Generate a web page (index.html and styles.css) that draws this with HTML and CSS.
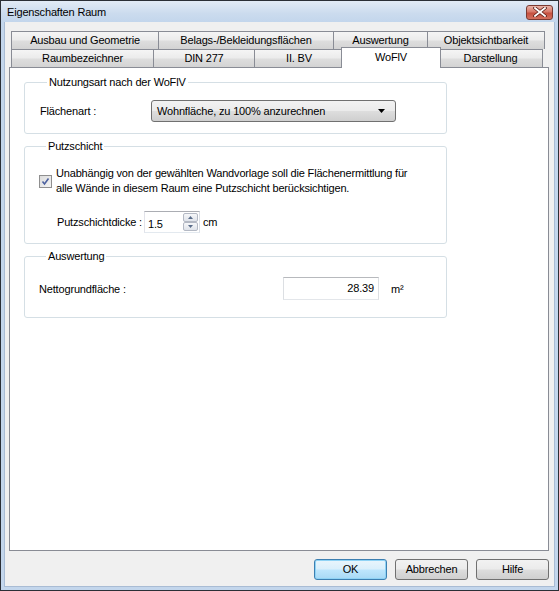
FILE: index.html
```html
<!doctype html>
<html lang="de">
<head>
    <meta charset="UTF-8">
    <title>Eigenschaften Raum</title>
    <link rel="stylesheet" href="styles.css">
</head>
<body>
<div class="window">
    <div class="titlebar">
        <span class="title">Eigenschaften Raum</span>
        <span class="close">
            <svg width="14" height="10" viewBox="0 0 14 10">
                <path d="M2 1 L12 9 M12 1 L2 9" stroke="#5a1d16" stroke-width="3.4" stroke-linecap="square"/>
                <path d="M2 1 L12 9 M12 1 L2 9" stroke="#fff" stroke-width="1.8" stroke-linecap="square"/>
            </svg>
        </span>
    </div>
    <div class="client">
        <div class="tabs">
            <div class="tabrow">
                <div class="tab t-ausbau">Ausbau und Geometrie</div>
                <div class="tab t-belag">Belags-/Bekleidungsflächen</div>
                <div class="tab t-ausw">Auswertung</div>
                <div class="tab t-objekt">Objektsichtbarkeit</div>
            </div>
            <div class="tabrow">
                <div class="tab t-raum">Raumbezeichner</div>
                <div class="tab t-din">DIN 277</div>
                <div class="tab t-bv">II. BV</div>
                <div class="tab t-wofl active">WoFlV</div>
                <div class="tab t-darst">Darstellung</div>
            </div>
        </div>
        <div class="panel">
            <fieldset class="group g-nutz">
                <legend>Nutzungsart nach der WoFlV</legend>
                <div class="row">
                    <span class="lbl lbl-art">Flächenart :</span>
                    <div class="combo">
                        <span>Wohnfläche, zu 100% anzurechnen</span>
                        <svg class="arrow" width="7" height="4" viewBox="0 0 7 4"><path d="M0 0 H7 L3.5 4 Z" fill="#000"/></svg>
                    </div>
                </div>
            </fieldset>
            <fieldset class="group g-putz">
                <legend>Putzschicht</legend>
                <div class="check">
                    <span class="box">
                        <svg width="11" height="11" viewBox="0 0 11 11">
                            <path d="M2.5 5.5 L4.5 8 L8.5 2.5" fill="none" stroke="#4d62a0" stroke-width="1.6"/>
                        </svg>
                    </span>
                    <span class="check-text">Unabhängig von der gewählten Wandvorlage soll die Flächenermittlung für<br>alle Wände in diesem Raum eine Putzschicht berücksichtigen.</span>
                </div>
                <div class="row spinrow">
                    <span class="lbl lbl-dicke">Putzschichtdicke :</span>
                    <div class="spin">
                        <span class="spin-val">1.5</span>
                        <span class="spin-btns">
                            <span class="sbtn"><svg width="5" height="3" viewBox="0 0 5 3"><path d="M0 3 H5 L2.5 0 Z" fill="#5a6d8a"/></svg></span>
                            <span class="sbtn"><svg width="5" height="3" viewBox="0 0 5 3"><path d="M0 0 H5 L2.5 3 Z" fill="#5a6d8a"/></svg></span>
                        </span>
                    </div>
                    <span class="unit">cm</span>
                </div>
            </fieldset>
            <fieldset class="group g-ausw">
                <legend>Auswertung</legend>
                <div class="row">
                    <span class="lbl lbl-netto">Nettogrundfläche :</span>
                    <div class="field">28.39</div>
                    <span class="unit unit-m2">m²</span>
                </div>
            </fieldset>
        </div>
        <div class="buttons">
            <div class="btn default">OK</div>
            <div class="btn">Abbrechen</div>
            <div class="btn">Hilfe</div>
        </div>
    </div>
</div>
</body>
</html>
```

FILE: styles.css
```css
* {
    margin: 0;
    padding: 0;
    box-sizing: border-box;
}

body {
    font-family: "Liberation Sans", Arial, sans-serif;
    font-size: 11px;
    letter-spacing: -0.17px;
    color: #000;
    background: #fff;
}

.window {
    width: 559px;
    height: 591px;
    border: 1px solid #2b2f36;
    background: #c3d6ec;
    display: flex;
    flex-direction: column;
}

.titlebar {
    height: 21px;
    background: linear-gradient(#e2ebf6, #cbdbee 60%, #c3d6ec);
    display: flex;
    align-items: center;
    justify-content: space-between;
    padding: 0 5px 0 6px;
}

.title {
    font-size: 11px;
}

.close {
    width: 27px;
    height: 15px;
    border: 1px solid #7a3a32;
    border-radius: 3px;
    background: linear-gradient(#e9b3a8, #d77868 45%, #c5503f 55%, #d3715f);
    display: flex;
    align-items: center;
    justify-content: center;
    margin-top: 1px;
}

.client {
    flex: 1;
    margin: 0 3px 3px 3px;
    background: #f0f0f0;
    border: 1px solid #a9bcd4;
    border-top: 0;
    padding: 9px 5px 0 4px;
    display: flex;
    flex-direction: column;
}

.tabs {
    margin: 0 3px 0 2px;
}

.tabrow {
    display: flex;
    height: 18px;
}

.tab {
    height: 18px;
    border: 1px solid #898c95;
    border-bottom: 0;
    margin-right: -1px;
    background: linear-gradient(#f5f5f5, #ebebeb 48%, #dedede 52%, #d3d3d3);
    text-align: center;
    line-height: 17px;
    white-space: nowrap;
}

.t-ausbau { width: 148px; }
.t-belag { width: 176px; }
.t-ausw { width: 95px; }
.t-objekt { width: 118px; }
.t-raum { width: 143px; }
.t-din { width: 102px; }
.t-bv { width: 90px; }
.t-wofl { width: 97px; }
.t-darst { width: 105px; }

.tab.active {
    position: relative;
    z-index: 2;
    background: #fff;
    height: 21px;
    margin: -2px -3px -1px -2px;
    width: 100px;
    line-height: 18px;
}

.panel {
    height: 484px;
    background: #fff;
    border: 1px solid #898c95;
    padding: 8px 0 0 14px;
}

.group {
    width: 423px;
    border: 1px solid #d5dfe5;
    border-radius: 3px;
}

.group legend {
    margin-left: 7px;
    padding: 0 2px;
    line-height: 13px;
}

.g-nutz {
    padding: 11px 0 11px 15px;
}

.g-putz {
    margin-top: 6px;
    padding: 13px 0 10px 14px;
}

.g-ausw {
    margin-top: 6px;
    padding: 14px 0 17px 14px;
}

.row {
    display: flex;
    align-items: center;
    white-space: nowrap;
}

.lbl {
    flex-shrink: 0;
}

.lbl-art {
    width: 111px;
}

.combo {
    width: 245px;
    height: 22px;
    border: 1px solid #707070;
    border-radius: 3px;
    background: linear-gradient(#f2f2f2, #ebebeb 48%, #dddddd 52%, #cfcfcf);
    display: flex;
    align-items: center;
    justify-content: space-between;
    padding: 0 10px 0 5px;
}

.check {
    display: flex;
    align-items: center;
    line-height: 15px;
}

.box {
    width: 13px;
    height: 13px;
    border: 1px solid #8f8f8f;
    background: linear-gradient(135deg, #dcdcdc, #f4f4f4);
    margin-right: 4px;
    display: flex;
    align-items: center;
    justify-content: center;
}

.spinrow {
    margin-top: 15px;
    padding-left: 18px;
}

.lbl-dicke {
    width: 87px;
}

.spin {
    width: 56px;
    height: 22px;
    border: 1px solid #abadb3;
    border-color: #abadb3 #dbdfe6 #e3e9ef #e2e3ea;
    background: #fff;
    display: flex;
    justify-content: space-between;
    padding: 1px 1px 1px 3px;
}

.spin-val {
    line-height: 20px;
    padding-top: 1px;
}

.spin-btns {
    display: flex;
    flex-direction: column;
    width: 15px;
}

.sbtn {
    flex: 1;
    border: 1px solid #b4b9c4;
    border-radius: 2px;
    background: linear-gradient(#f6f7f9, #dfe3ea);
    display: flex;
    align-items: center;
    justify-content: center;
}

.unit {
    margin-left: 3px;
}

.lbl-netto {
    width: 244px;
}

.field {
    width: 96px;
    height: 23px;
    border: 1px solid #c9cbd0;
    border-color: #b7b9bd #dcdfe3 #e3e6ea #dcdfe3;
    background: #fff;
    text-align: right;
    line-height: 21px;
    padding-right: 4px;
}

.unit-m2 {
    margin-left: 12px;
}

.buttons {
    display: flex;
    justify-content: flex-end;
    gap: 8px;
    margin-top: 8px;
}

.btn {
    width: 73px;
    height: 21px;
    border: 1px solid #707070;
    border-radius: 3px;
    background: linear-gradient(#f2f2f2, #ebebeb 48%, #dddddd 52%, #cfcfcf);
    text-align: center;
    line-height: 19px;
}

.btn.default {
    border-color: #3c7fb1;
    background: linear-gradient(#e9f5fc, #d9effb 48%, #bee6fd 52%, #a7d9f5);
    box-shadow: inset 0 0 0 1px #8fd3f5;
}
```
